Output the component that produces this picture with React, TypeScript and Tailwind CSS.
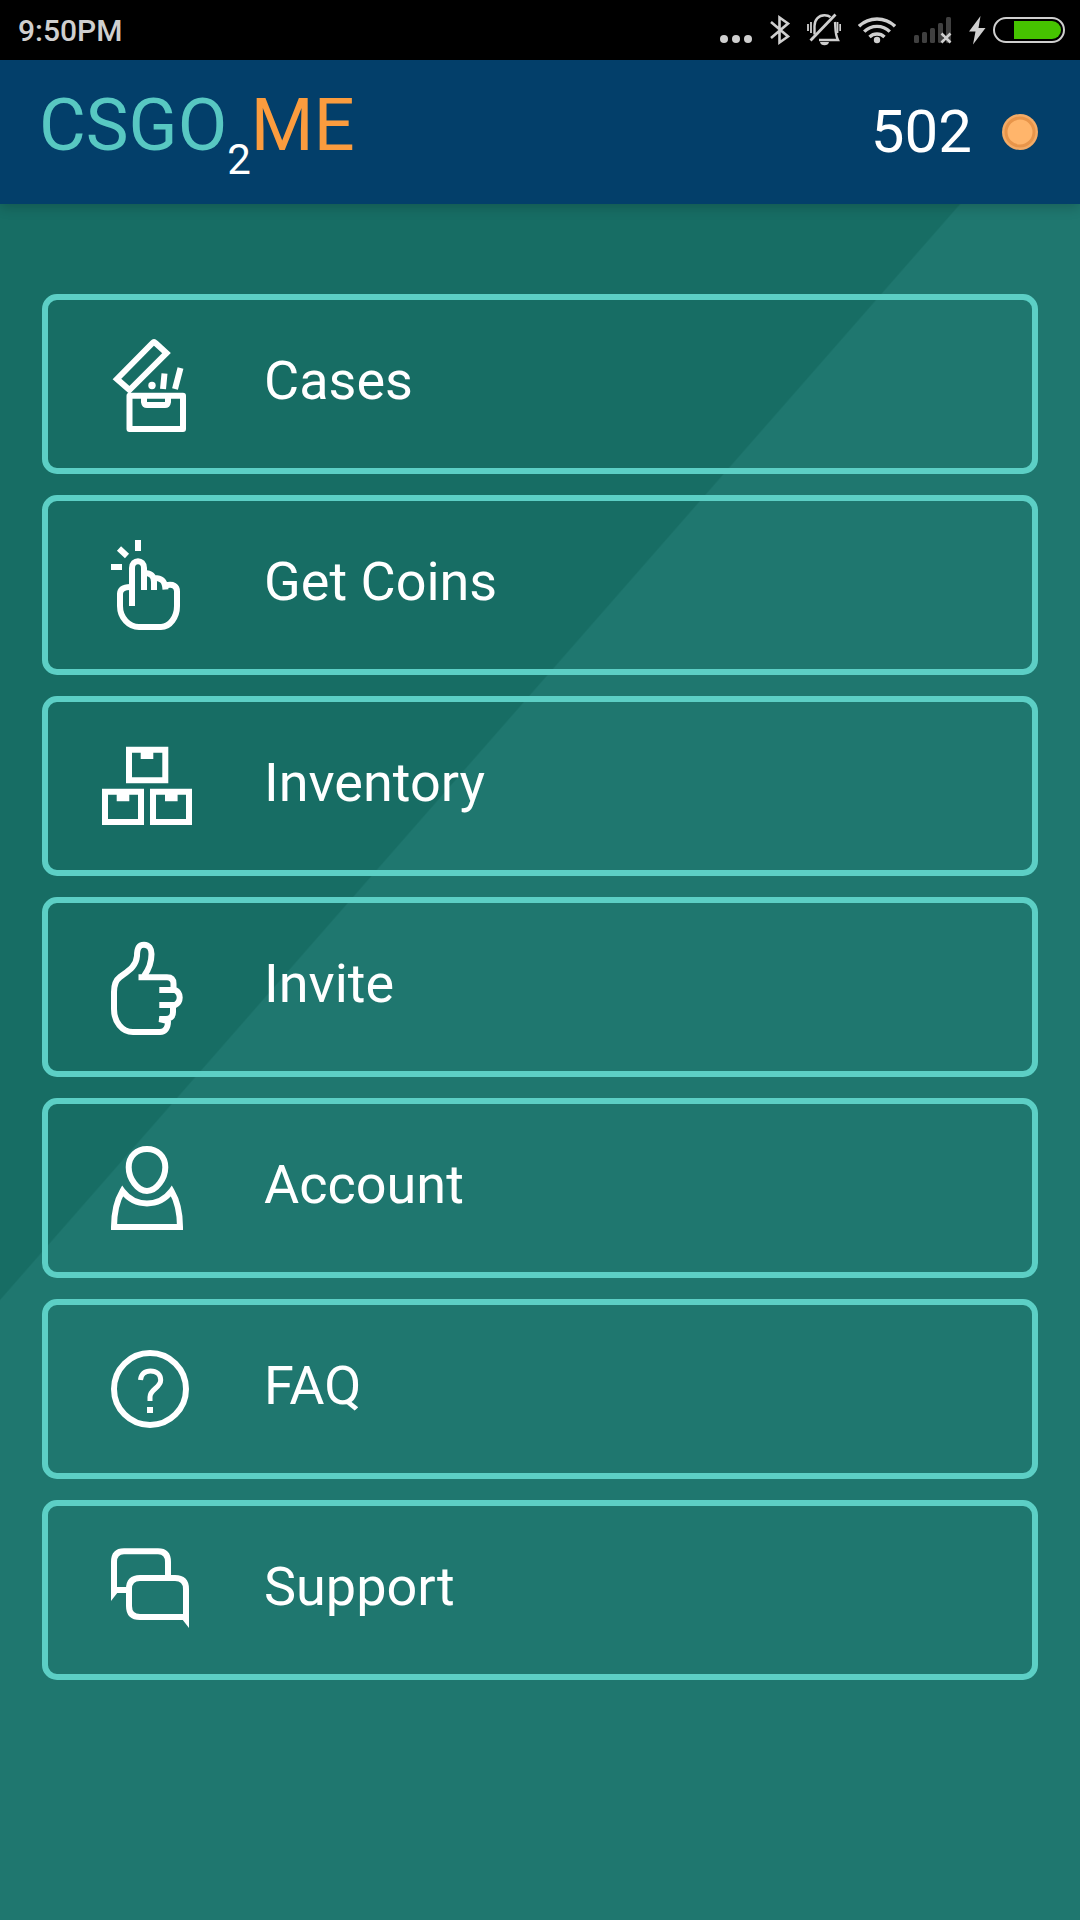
import React from 'react';

function StatusIcons() {
  return (
    <div className="flex items-center text-[#cfcfcf]">
      <svg width="32" height="60" viewBox="0 0 32 60" fill="currentColor">
        <circle cx="4" cy="39" r="4" />
        <circle cx="16" cy="39" r="4" />
        <circle cx="28" cy="39" r="4" />
      </svg>

      {/* Bluetooth */}
      <svg width="22" height="60" viewBox="0 0 22 60" className="ml-4.5" fill="none" stroke="currentColor" strokeWidth="2.6">
        <path d="M1 22l17 14.5-8.5 6V17.5l8.5 6L1 38" />
      </svg>

      {/* Bell, muted */}
      <svg width="34" height="60" viewBox="0 0 34 60" className="ml-[15px]" fill="none" stroke="currentColor" strokeWidth="2.4">
        <path d="M7.5 34.5V26c0-6 4-10.7 10-10.7 2.6 0 4.500.6 6 1.9M28 22c.8 6-.4 11 3 18H12" />
        <path d="M3.5 40.5L28.5 14.5" strokeWidth="2.8" />
        <path d="M1 24v7M4 22v11M30.5 22v11M33.2 24v7" strokeWidth="1.8" />
        <path d="M13 42h9a4.6 4 0 0 1-9 0z" fill="currentColor" stroke="none" />
      </svg>

      {/* Wifi */}
      <svg width="38" height="60" viewBox="0 0 38 60" className="ml-[17px]" fill="none" stroke="currentColor" strokeWidth="3.4">
        <path d="M1 26.2a26 26 0 0 1 36 0" />
        <path d="M6.2 31.6a18.3 18.3 0 0 1 25.6 0" />
        <path d="M11.5 37a11 11 0 0 1 15 0" />
        <circle cx="19" cy="40" r="3.2" fill="currentColor" stroke="none" />
      </svg>

      {/* No signal */}
      <svg width="38" height="60" viewBox="0 0 38 60" className="ml-[18px]">
        <g fill="#404040">
          <rect x="0" y="35" width="5" height="8" rx="1.5" />
          <rect x="8" y="32" width="5" height="11" rx="1.5" />
          <rect x="16" y="28" width="5" height="15" rx="1.5" />
          <rect x="24" y="23" width="5" height="20" rx="1.5" />
          <rect x="32" y="17" width="5" height="26" rx="1.5" />
        </g>
        <path d="M27.5 33.5l9 9M36.5 33.5l-9 9" stroke="currentColor" strokeWidth="2.6" />
      </svg>

      {/* Charging */}
      <svg width="17" height="60" viewBox="0 0 17 60" className="ml-[17px]" fill="currentColor">
        <path d="M11.5 16L0 31.5h6.5L4 44.5 16.500 28H9.5z" />
      </svg>
      <div className="ml-[7px] flex h-[26px] w-[72px] justify-end rounded-full border-2 border-[#cfcfcf] p-0.5">
        <div className="w-[47px] rounded-r-full bg-[#46c400]" />
      </div>
    </div>
  );
}

function CasesIcon() {
  return (
    <>
      <path d="M27.5 54L15 43 50.500 7q1.500-1.500 3 0L64.500 17z" />
      <path d="M27.5 59.7h53.500v33.300H27.5z" strokeLinejoin="round" />
      <path d="M42 60v6q.5 3 3 3h18q2.5 0 3-3v-6" />
      <path d="M62.5 37.5L61 53M78.5 32L73 53" />
      <circle cx="50" cy="49.5" r="3.7" fill="currentColor" stroke="none" />
    </>
  );
}

function CoinsIcon() {
  return (
    <>
      <path d="M36 3v11M9 30h11M17 11.5l8 7.5" />
      <path d="M30 69V31c0-9 12-9 12 0v22" />
      <path d="M42 36c6 0 10 2 10 9v8M52 41c7 0 11 2 11.5 11.5M63.5 48.5c8-2 11.5 1 11.5 6V69c0 11-7 21-16 21H37c-10 0-19-9-19-21V57c0-4 3-7 10-7" />
    </>
  );
}

function InventoryIcon() {
  return (
    <>
      <path d="M27 11.7h36.3v30.6H27zM3 53.7h36v30.3H3zM51 53.7h36v30.3H51z" />
      <path d="M38.7 9h12.6v12H38.7zM14.7 51h12.6v12.3H14.7zM63 51h12.6v12.3H63z" fill="currentColor" stroke="none" />
    </>
  );
}

function InviteIcon() {
  return (
    <path d="M36.5 38.3H65c5 0 6.5 3 6.5 6.5v6.2H57.3H73c3 1.5 4.7 4 4.7 7.5S76 64.5 73 66H57.3H71v7c0 5-3 7-7 7h-6.700L66 82c0 7-3 11-8 11H31c-11 0-19-10-19-23V53c0-7 2-12 6-15 8-6 16-10 17-21 0-8 2-11.300 7-11.300s7.500 4 7.500 9.300c0 9-3 16-7.500 22" />
  );
}

function AccountIcon() {
  return (
    <>
      <path d="M45 9c10 0 18.3 7 18.3 18.2S54.5 51 45 51s-18.3-12.5-18.3-23.8S35 9 45 9z" />
      <path d="M12 87c0-13 2-25 8.5-36C33 67.5 57 67.5 69.5 51 76 62 78 74 78 87z" />
    </>
  );
}

function FaqIcon() {
  return (
    <>
      <circle cx="48" cy="48" r="36" />
      <path d="M38.5 39c.5-6 4.5-9 10-9 6 0 10.2 3.5 10.2 9 0 8-10.7 9-10.7 17v4" strokeWidth="5" />
      <path d="M45 66h6v6h-6z" fill="currentColor" stroke="none" />
    </>
  );
}

function SupportIcon() {
  return (
    <>
      <path d="M26 48H12V20q0-10.700 10-10.700h34q10 0 10 10.700v14" />
      <path d="M84 75H38q-11 0-11-11V47q0-11 11-11h35q11 0 11 11z" />
      <path d="M9 46v13l7-9zM87 73v13l-7-9z" fill="currentColor" stroke="none" />
    </>
  );
}

const menu = [
  { label: 'Cases', icon: CasesIcon },
  { label: 'Get Coins', icon: CoinsIcon },
  { label: 'Inventory', icon: InventoryIcon },
  { label: 'Invite', icon: InviteIcon },
  { label: 'Account', icon: AccountIcon },
  { label: 'FAQ', icon: FaqIcon },
  { label: 'Support', icon: SupportIcon },
];

export default function App() {
  return (
    <div className="flex h-[1920px] w-[1080px] flex-col overflow-hidden bg-black font-['Roboto',sans-serif]">
      <div className="flex h-[60px] shrink-0 items-center justify-between pr-[15px] pl-[18px]">
        <span className="pt-0.5 text-[30px] leading-none font-medium text-[#cfcfcf]">9:50PM</span>
        <StatusIcons />
      </div>

      <header className="z-10 flex h-36 shrink-0 items-center justify-between bg-[#033f6a] pr-[42px] pl-[39px] shadow-[0_3px_12px_rgba(0,0,0,0.2)]">
        <h1 className="flex items-baseline pb-3 text-[72px] leading-none">
          <span className="text-[#58c8c2]">CSGO</span>
          <span className="relative top-6 text-[42px] leading-none text-white">2</span>
          <span className="text-[#fb9c3e]">ME</span>
        </h1>
        <div className="flex items-center gap-[30px]">
          <span className="text-[60px] leading-none text-white">502</span>
          <svg width="36" height="36" viewBox="0 0 36 36">
            <circle cx="18" cy="18" r="18" fill="#f3ab66" />
            <circle cx="18" cy="18" r="14" fill="#ffb56b" stroke="#e8954a" strokeWidth="3" />
          </svg>
        </div>
      </header>

      <main className="flex flex-1 flex-col gap-[21px] bg-[linear-gradient(131.22deg,#176d64_721.5px,#1f776f_723px)] px-[42px] pt-[90px]">
        {menu.map((item) => (
          <button
            key={item.label}
            className="flex h-[180px] items-start rounded-[15px] border-6 border-[#5ccfc5] pl-[54px] text-left text-white"
          >
            <svg
              width="90"
              height="98"
              viewBox="0 0 90 98"
              className="mt-9 shrink-0"
              fill="none"
              stroke="currentColor"
              strokeWidth="6"
            >
              <item.icon />
            </svg>
            <span className="mt-[49px] ml-[72px] text-[54px] leading-[64px]">{item.label}</span>
          </button>
        ))}
      </main>
    </div>
  );
}
